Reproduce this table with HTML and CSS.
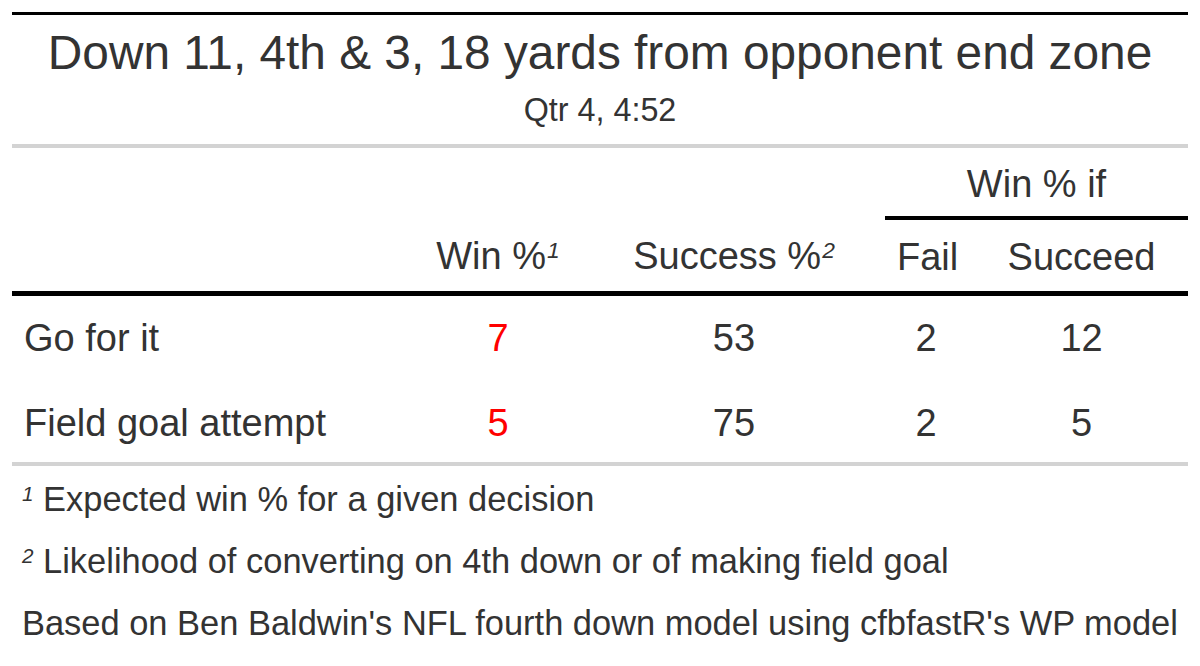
FILE: index.html
```html
<!DOCTYPE html>
<html>
<head>
<meta charset="utf-8">
<link rel="stylesheet" href="styles.css">
</head>
<body>
<div class="wrap">
<table class="gt">
  <colgroup>
    <col class="c-stub">
    <col class="c-win">
    <col class="c-succ">
    <col class="c-fail">
    <col class="c-sd">
  </colgroup>
  <thead>
    <tr>
      <th colspan="5" class="heading">
        <div class="title">Down 11, 4th &amp; 3, 18 yards from opponent end zone</div>
        <div class="subtitle">Qtr 4, 4:52</div>
      </th>
    </tr>
    <tr class="spanrow">
      <th class="blank"></th>
      <th class="blank"></th>
      <th class="blank"></th>
      <th colspan="2" class="spanner"><span>Win % if</span></th>
    </tr>
    <tr class="labels">
      <th class="blank"></th>
      <th class="lab">Win %<sup class="mark">1</sup></th>
      <th class="lab">Success %<sup class="mark">2</sup></th>
      <th class="lab">Fail</th>
      <th class="lab sd">Succeed</th>
    </tr>
  </thead>
  <tbody>
    <tr class="r1">
      <td class="stub">Go for it</td>
      <td class="num red">7</td>
      <td class="num">53</td>
      <td class="num">2</td>
      <td class="num sd">12</td>
    </tr>
    <tr class="r2">
      <td class="stub">Field goal attempt</td>
      <td class="num red">5</td>
      <td class="num">75</td>
      <td class="num">2</td>
      <td class="num sd">5</td>
    </tr>
  </tbody>
  <tfoot>
    <tr>
      <td colspan="5" class="foot">
        <div class="fn first"><sup class="mark">1</sup> Expected win % for a given decision</div>
        <div class="fn"><sup class="mark">2</sup> Likelihood of converting on 4th down or of making field goal</div>
        <div class="fn">Based on Ben Baldwin's NFL fourth down model using cfbfastR's WP model</div>
      </td>
    </tr>
  </tfoot>
</table>
</div>
</body>
</html>
```

FILE: styles.css
```css
html, body {
  margin: 0;
  padding: 0;
  background: #ffffff;
}

.wrap {
  padding: 12px 12px 0 12px;
}

.gt {
  width: 1176px;
  table-layout: fixed;
  border-collapse: collapse;
  font-family: "Liberation Sans", Arial, Helvetica, sans-serif;
  font-size: 38px;
  color: #333333;
  border-top: 3px solid #000000;
}

.c-stub { width: 401px; }
.c-win { width: 170px; }
.c-succ { width: 302px; }
.c-fail { width: 82px; }
.c-sd { width: 221px; }

th, td {
  padding: 0;
  font-weight: normal;
}

.heading {
  text-align: center;
  padding: 14px 12px 16px 12px;
  border-bottom: 4px solid #d3d3d3;
}

.title {
  font-size: 47.8px;
  line-height: 48px;
}

.subtitle {
  font-size: 32.3px;
  line-height: 36px;
  margin-top: 15px;
}

.spanrow th {
  line-height: 44px;
  padding: 14px 0 10px 0;
}

.spanner {
  text-align: center;
  border-bottom: 4px solid #000000;
}

.labels th {
  line-height: 44px;
  padding: 15px 12px 12px 12px;
  text-align: center;
  border-bottom: 5px solid #000000;
}

.labels th.lab-win {
  padding-left: 16px;
}

.mark {
  font-style: italic;
  font-size: 60%;
  line-height: 0;
  vertical-align: 0.5em;
  margin-left: 1px;
}

.fn .mark {
  margin-left: 0;
}

tbody td {
  line-height: 44px;
  padding: 20px 12px 20px 12px;
}

.labels th.sd,
tbody td.sd {
  padding-left: 20px;
  padding-right: 12px;
}

.r2 td {
  padding-top: 21px;
  padding-bottom: 17px;
  border-bottom: 4px solid #d3d3d3;
}

.stub {
  text-align: left;
}

.num {
  text-align: center;
}

.red {
  color: #ff0000;
}

.foot {
  padding: 2px 4px 0 10px;
}

.fn {
  font-size: 34.45px;
  line-height: 42px;
  padding: 10px 0;
  white-space: nowrap;
}
```
